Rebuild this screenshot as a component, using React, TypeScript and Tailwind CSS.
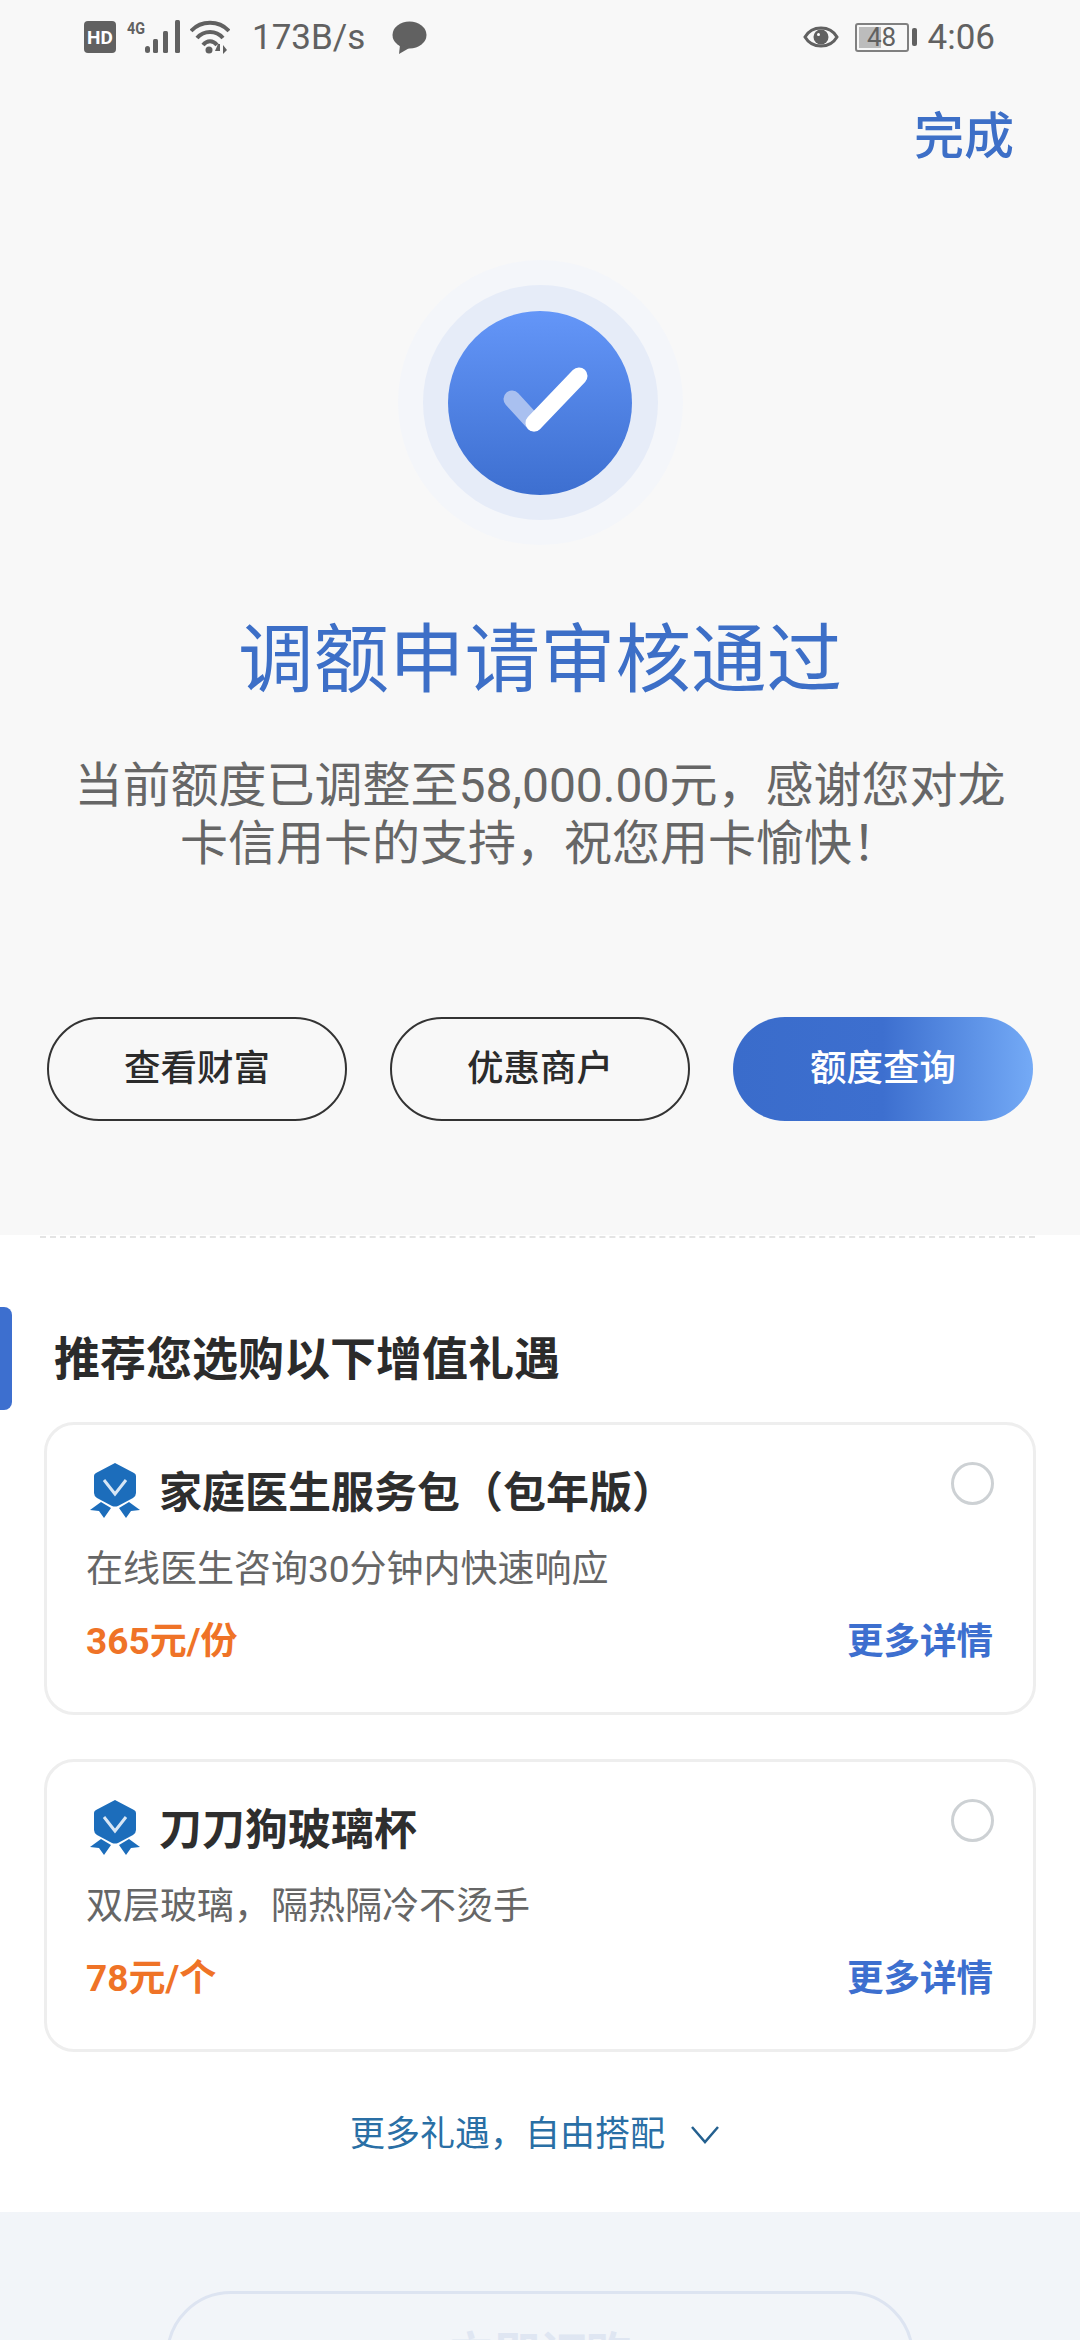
const sans = "font-['Roboto','Noto_Sans_CJK_SC',sans-serif]";

const StatusBar = () => (
  <div className="flex h-[70px] items-center justify-between pl-[84px] pr-[85px] pt-[4px] text-[#616161]">
    <div className="flex items-center">
      <svg width="32" height="32" viewBox="0 0 32 32">
        <rect width="32" height="32" rx="4" fill="#616161" />
        <text x="16" y="23" textAnchor="middle" fontSize="19" fontWeight="700" fill="#fff" fontFamily="Roboto">HD</text>
      </svg>
      <svg className="ml-[11px] overflow-visible" width="54" height="34" viewBox="0 0 54 34" fill="#616161">
        <text x="0" y="14" fontSize="17" fontWeight="700" fontFamily="Roboto" textLength="18" lengthAdjust="spacingAndGlyphs">4G</text>
        <rect x="18" y="26" width="5" height="7" rx="2.5" />
        <rect x="26" y="19" width="5" height="14" rx="1.5" />
        <rect x="36" y="11" width="5" height="22" rx="1.5" />
        <rect x="48" y="0" width="5" height="33" rx="1.5" />
      </svg>
      <svg className="ml-[9px]" width="40" height="34" viewBox="0 0 40 34" fill="none" stroke="#616161" strokeWidth="4">
        <path d="M1 11 C11 0 29 0 39 11" />
        <path d="M7 18 C14 10 26 10 33 18" />
        <path d="M13 25 C17 20 23 20 27 25" />
        <circle cx="19" cy="30" r="3.5" fill="#616161" stroke="none" />
        <path d="M28 24 l-3 7 h5 v-7 M33 25 v9 l4 -4 z" fill="#616161" stroke="none" />
      </svg>
      <span className="ml-[22px] text-[35px] leading-none">173B/s</span>
      <svg className="ml-[27px]" width="35" height="33" viewBox="0 0 35 33" fill="#616161">
        <ellipse cx="17.5" cy="14" rx="17" ry="13.5" />
        <path d="M8 24 L7 33 L19 26 Z" />
      </svg>
    </div>
    <div className="flex items-center">
      <svg width="36" height="28" viewBox="0 0 36 28" fill="none">
        <path d="M2 14 C9 2 27 2 34 14 C27 26 9 26 2 14 Z" stroke="#616161" strokeWidth="3" />
        <circle cx="18" cy="14" r="7.5" fill="#616161" />
        <circle cx="15.5" cy="11.5" r="1.5" fill="#fff" />
      </svg>
      <div className="ml-[16px] flex items-center">
        <div className="relative h-[29px] w-[54px] rounded-[3px] border-2 border-[#808080] text-center text-[26px] leading-[25px]">
          <div className="absolute inset-y-[2px] left-[2px] w-[22px] bg-[#bcbcbc]" />
          <span className="relative">48</span>
        </div>
        <div className="ml-[3px] h-[18px] w-[5px] rounded-[2px] bg-[#616161]" />
      </div>
      <span className="ml-[11px] text-[35px] leading-none">4:06</span>
    </div>
  </div>
);

const SuccessIcon = () => (
  <div className="flex h-[285px] w-[285px] items-center justify-center rounded-full bg-[#f4f6fa]">
    <div className="flex h-[235px] w-[235px] items-center justify-center rounded-full bg-[#e6ecf8]">
      <div className="flex h-[184px] w-[184px] items-center justify-center rounded-full bg-gradient-to-b from-[#6496f8] to-[#3d6fd0]">
        <svg width="100" height="76" viewBox="0 0 100 76" fill="none" strokeLinecap="round" strokeWidth="17">
          <path d="M22 34 L44 58" stroke="#a9c0f0" />
          <path d="M44 58 L89 11" stroke="#fff" />
        </svg>
      </div>
    </div>
  </div>
);

const Badge = () => (
  <svg width="50" height="56" viewBox="0 0 50 56">
    <path d="M25 0 L44 10 Q46 11 46 13 V30 Q46 33 43 35 L28 43 Q25 44 22 43 L7 35 Q4 33 4 30 V13 Q4 11 6 10 Z" fill="#1c6dbb" />
    <path d="M14 17 L25 31 L36 17" fill="none" stroke="#d7e6f5" strokeWidth="3" />
    <path d="M0 47 L11 39 L21 45 L14 55 L9 48 Z M50 47 L39 39 L29 45 L36 55 L41 48 Z" fill="#1c6dbb" />
  </svg>
);

const OutlineButton = ({ label }: { label: string }) => (
  <button className="h-[104px] w-[300px] rounded-full border-2 border-[#333] text-[36.5px] font-medium text-[#2b2b2b]">
    {label}
  </button>
);

const GiftCard = ({ name, desc, price }: { name: string; desc: string; price: string }) => (
  <div className="relative h-[293px] rounded-[30px] border-[3px] border-[#eeeeee] pl-[43px] pr-[40px] pt-[38px]">
    <div className="flex h-[56px] items-center">
      <Badge />
      <span className="ml-[19px] pt-[5px] text-[43px] font-bold leading-none text-[#2e2e2e]">{name}</span>
    </div>
    <div className="-ml-[4px] mt-[27px] text-[37px] leading-[48px] text-[#666666]">{desc}</div>
    <div className="-ml-[4px] mt-[23px] flex items-center justify-between leading-[50px]">
      <span className="text-[37px] font-bold text-[#ef7327]">{price}</span>
      <span className="text-[36.5px] font-bold text-[#3d6fcf]">更多详情</span>
    </div>
    <div className="absolute right-[39px] top-[37px] h-[43px] w-[43px] rounded-full border-[3px] border-[#cdd1d4] bg-white" />
  </div>
);

export default function App() {
  return (
    <div className={`${sans} h-[2340px] w-[1080px] overflow-hidden bg-white`}>
      <div className="flex h-[1235px] flex-col bg-[#f8f8f8]">
        <StatusBar />
        <div className="mt-[38px] pr-[66px] text-right text-[50px] font-medium leading-[58px] text-[#3d6fc7]">完成</div>
        <div className="mt-[94px] flex justify-center">
          <SuccessIcon />
        </div>
        <h1 className="mt-[70px] text-center text-[75.5px] font-normal leading-[90px] text-[#3d6fc7]">调额申请审核通过</h1>
        <p className="mt-[52px] px-[70px] text-center text-[48px] leading-[58px] text-[#666666]">
          当前额度已调整至58,000.00元，感谢您对龙卡信用卡的支持，祝您用卡愉快！
        </p>
        <div className="mt-[144px] flex justify-between pl-[47px] pr-[47px]">
          <OutlineButton label="查看财富" />
          <OutlineButton label="优惠商户" />
          <button className="h-[104px] w-[300px] rounded-full bg-gradient-to-r from-[#3a6ccb] via-[#3d6fcf] via-50% to-[#74aaf6] text-[36.5px] font-medium text-white">
            额度查询
          </button>
        </div>
      </div>

      <div className="relative">
        <div className="absolute left-[40px] right-[45px] top-[1px] border-t-2 border-dashed border-[#e4e4e4]" />
        <div className="absolute left-0 top-[72px] h-[103px] w-[12px] rounded-r-[8px] bg-[#3d6fcf]" />
        <h2 className="pl-[54px] pt-[96px] text-[46px] font-bold leading-[56px] text-[#2b2b2b]">推荐您选购以下增值礼遇</h2>
        <div className="mt-[35px] flex flex-col gap-[44px] pl-[44px] pr-[44px]">
          <GiftCard name="家庭医生服务包（包年版）" desc="在线医生咨询30分钟内快速响应" price="365元/份" />
          <GiftCard name="刀刀狗玻璃杯" desc="双层玻璃，隔热隔冷不烫手" price="78元/个" />
        </div>
        <div className="mt-[59px] flex items-center justify-center pr-[10px] text-[35px] leading-[48px] text-[#2a6fa5]">
          更多礼遇，自由搭配
          <svg className="ml-[25px]" width="30" height="20" viewBox="0 0 30 20" fill="none" stroke="#24608f" strokeWidth="2.5">
            <path d="M2 2 L15 17 L28 2" />
          </svg>
        </div>
      </div>

      <div className="mt-[53px] h-[200px] bg-[#f2f5f9] pl-[166px] pr-[166px] pt-[79px]">
        <div className="flex h-[130px] justify-center rounded-[65px] border-[3px] border-[#dde4f1] pt-[32px] text-[46px] font-bold leading-[56px] text-[#dfe6f2]">
          立即订购
        </div>
      </div>
    </div>
  );
}
